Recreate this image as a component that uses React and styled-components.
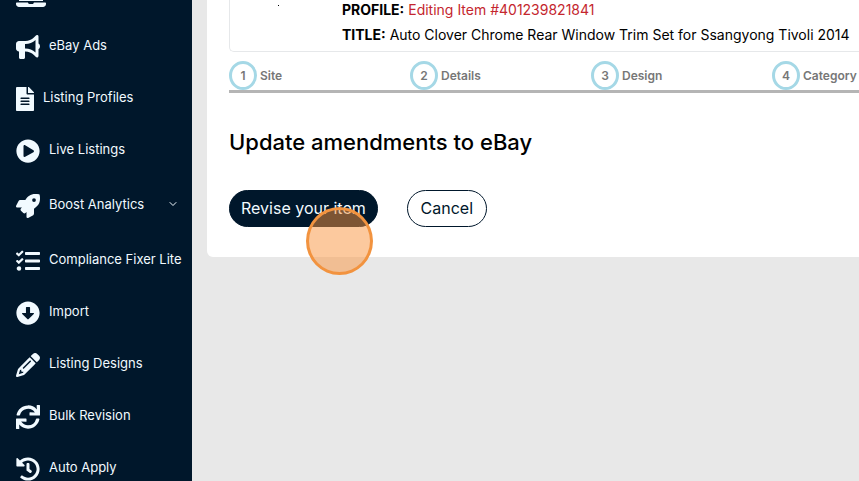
import styled, { createGlobalStyle } from "styled-components";
import {
  FaLaptop,
  FaFileAlt,
  FaPlayCircle,
  FaRocket,
  FaTasks,
  FaArrowAltCircleDown,
  FaSync,
  FaHistory,
} from "react-icons/fa";
import { FaBullhorn, FaPencil } from "react-icons/fa6";
import { FiChevronDown } from "react-icons/fi";

const GlobalStyle = createGlobalStyle`
  * {
    box-sizing: border-box;
  }
  body {
    margin: 0;
    overflow: hidden;
    background-color: #e8e8e8;
    font-family: Inter, "Open Sans", sans-serif;
    color: #000;
  }
`;

const Page = styled.div`
  display: flex;
  height: 100vh;
  overflow: hidden;
`;

const Sidebar = styled.aside`
  flex: 0 0 192px;
  overflow: hidden;
  background-color: #00172b;
`;

/* the menu is scrolled a little, its first entry is partly out of view */
const Menu = styled.nav`
  display: flex;
  flex-direction: column;
  margin-top: -31px;
`;

const MenuItem = styled.a`
  display: flex;
  flex-shrink: 0;
  align-items: center;
  gap: 9px;
  height: ${({ $tall }) => ($tall ? 58 : 52)}px;
  padding: 0 13px 0 16px;
  color: #f1faff;
  font-size: 13px;
  text-decoration: none;
  white-space: nowrap;

  > svg:first-child {
    flex-shrink: 0;
    width: ${({ $icon }) => $icon || 24}px;
    height: 24px;
  }
`;

const MenuLabel = styled.span`
  flex: 1;
  padding-bottom: 5px;
  line-height: 20px;
`;

const Chevron = styled(FiChevronDown)`
  flex-shrink: 0;
  width: 12px;
  height: 12px;
  margin-bottom: 4px;
`;

const Main = styled.main`
  flex: 1;
  min-width: 0;
  padding-left: 15px;
`;

const Card = styled.section`
  padding: 0 0 30px 22px;
  background-color: #fff;
  border-bottom-left-radius: 6px;
`;

const ItemBox = styled.div`
  display: flex;
  height: 52px;
  border: 1px solid #e6e8ea;
  border-width: 0 0 1px 1px;
  border-bottom-left-radius: 5px;
`;

const Thumb = styled.div`
  flex: 0 0 112px;
  padding: 5px 0 0 48px;

  &::before {
    content: "";
    display: block;
    width: 1px;
    height: 1px;
    background-color: #000;
  }
`;

const Details = styled.div`
  margin-top: -3px;
  font-size: 14px;
  line-height: 25px;
  white-space: nowrap;
`;

const Profile = styled.span`
  color: #c4262e;
`;

const Steps = styled.ol`
  display: flex;
  margin: 9px 0 0;
  padding: 0;
  list-style: none;
  border-bottom: 3px solid #b5b5b5;
`;

const Step = styled.li`
  display: flex;
  flex: 0 0 181px;
  align-items: center;
  gap: 3px;
  color: #777;
  font-size: 12px;
  font-weight: 600;
`;

const StepNumber = styled.span`
  display: flex;
  align-items: center;
  justify-content: center;
  width: 28px;
  height: 29px;
  border: 3px solid #a5d8e6;
  border-radius: 50%;
`;

const Title = styled.h1`
  margin: 33px 0 0;
  font-size: 22px;
  font-weight: 500;
  line-height: 32px;
`;

const Actions = styled.div`
  display: flex;
  gap: 29px;
  margin-top: 32px;
`;

const ButtonWrap = styled.div`
  position: relative;
`;

const Button = styled.button`
  min-width: 80px;
  height: 37px;
  padding: 0 11px 2px;
  border: 1px solid #00172b;
  border-radius: 19px;
  background-color: ${({ $primary }) => ($primary ? "#00172b" : "#fff")};
  color: ${({ $primary }) => ($primary ? "#f1faff" : "#00172b")};
  font-family: inherit;
  font-size: 16px;
  cursor: pointer;
`;

const ClickMarker = styled.span`
  position: absolute;
  top: 17px;
  left: 77px;
  width: 67px;
  height: 68px;
  border: 3px solid #f2933f;
  border-radius: 50%;
  background-color: rgba(249, 148, 61, 0.5);
  pointer-events: none;
`;

const menu = [
  { icon: FaLaptop, label: "", width: 30 },
  { icon: FaBullhorn, label: "eBay Ads" },
  { icon: FaFileAlt, label: "Listing Profiles", width: 18 },
  { icon: FaPlayCircle, label: "Live Listings" },
  { icon: FaRocket, label: "Boost Analytics", open: true },
  { icon: FaTasks, label: "Compliance Fixer Lite" },
  { icon: FaArrowAltCircleDown, label: "Import" },
  { icon: FaPencil, label: "Listing Designs" },
  { icon: FaSync, label: "Bulk Revision" },
  { icon: FaHistory, label: "Auto Apply" },
];

const steps = ["Site", "Details", "Design", "Category"];

const App = () => {
  return (
    <>
      <GlobalStyle />
      <Page>
        <Sidebar>
          <Menu>
            {menu.map(({ icon: Icon, label, width, open }) => (
              <MenuItem key={label} href="#" $icon={width} $tall={open}>
                <Icon preserveAspectRatio={width === 30 ? "none" : undefined} />
                <MenuLabel>{label}</MenuLabel>
                {open && <Chevron />}
              </MenuItem>
            ))}
          </Menu>
        </Sidebar>
        <Main>
          <Card>
            <ItemBox>
              <Thumb />
              <Details>
                <div>
                  <b>PROFILE:</b> <Profile>Editing Item #401239821841</Profile>
                </div>
                <div>
                  <b>TITLE:</b> Auto Clover Chrome Rear Window Trim Set for
                  Ssangyong Tivoli 2014
                </div>
              </Details>
            </ItemBox>
            <Steps>
              {steps.map((step, i) => (
                <Step key={step}>
                  <StepNumber>{i + 1}</StepNumber>
                  {step}
                </Step>
              ))}
            </Steps>
            <Title>Update amendments to eBay</Title>
            <Actions>
              <ButtonWrap>
                <Button $primary>Revise your item</Button>
                <ClickMarker />
              </ButtonWrap>
              <Button>Cancel</Button>
            </Actions>
          </Card>
        </Main>
      </Page>
    </>
  );
};

export default App;
